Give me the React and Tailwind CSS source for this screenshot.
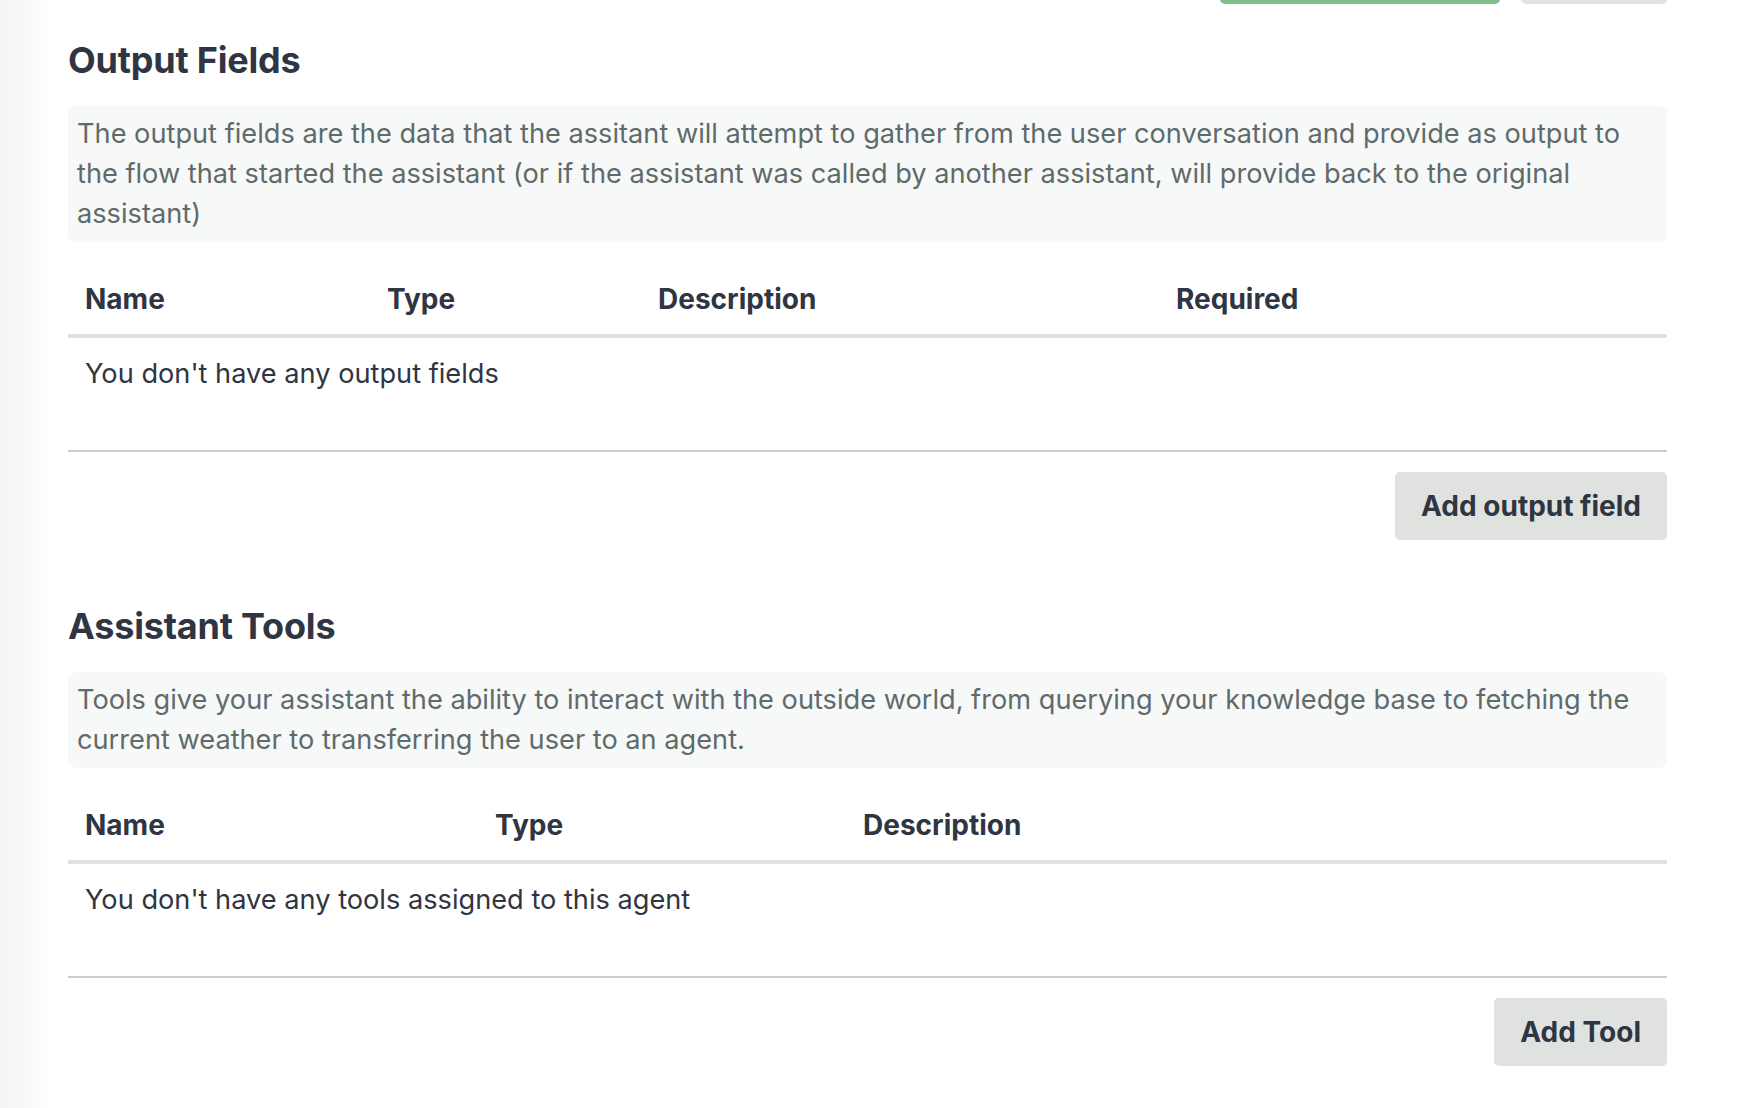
const outputColumns = [
  { label: "Name", width: "w-[302px]" },
  { label: "Type", width: "w-[271px]" },
  { label: "Description", width: "w-[518px]" },
  { label: "Required", width: "" },
];

const toolColumns = [
  { label: "Name", width: "w-[410px]" },
  { label: "Type", width: "w-[368px]" },
  { label: "Description", width: "" },
];

function SectionTable({ columns, emptyText }) {
  return (
    <table className="w-full mt-[21px] table-fixed border-collapse">
      <thead>
        <tr className="border-b-[4px] border-[#e0e2df]">
          {columns.map((col) => (
            <th
              key={col.label}
              className={`${col.width} text-left font-bold text-[28px] leading-[36px] px-[17px] pt-[18px] pb-[17px] text-[#2f3542]`}
            >
              {col.label}
            </th>
          ))}
        </tr>
      </thead>
      <tbody>
        <tr className="border-b-2 border-[#cccccc]">
          <td
            colSpan={columns.length}
            className="text-[27.2px] leading-[36px] px-[17px] pt-[18px] pb-[58px] text-[#2f3542]"
          >
            {emptyText}
          </td>
        </tr>
      </tbody>
    </table>
  );
}

function Section({ title, description, columns, emptyText, buttonLabel, className = "" }) {
  return (
    <section className={className}>
      <h2 className="text-[36px] leading-[40px] font-bold text-[#2f3542] tracking-[-0.2px]">{title}</h2>
      <p className="mt-[26px] bg-[#f7f8f8] rounded-lg px-[9px] py-2 text-[27.2px] leading-[40px] text-[#5f6b6b]">
        {description}
      </p>
      <SectionTable columns={columns} emptyText={emptyText} />
      <div className="flex justify-end mt-[20px]">
        <button className="bg-[#e0e2df] rounded-[5px] px-[26px] py-4 text-[28px] leading-[36px] font-bold text-[#2f3542]">
          {buttonLabel}
        </button>
      </div>
    </section>
  );
}

export default function App() {
  return (
    <div
      className="min-h-[1108px] flex bg-white"
      style={{ fontFamily: "Inter, 'Noto Sans', 'Liberation Sans', sans-serif" }}
    >
      {/* sidebar shadow edge */}
      <div className="w-[50px] shrink-0 bg-gradient-to-r from-[#f3f3f3] to-white" />

      <div className="flex-1 pl-[18px] pr-[79px] overflow-hidden">
        {/* buttons of the section above, scrolled off */}
        <div className="flex justify-end gap-[21px] -mt-[64px]">
          <button className="w-[280px] h-[68px] rounded-[5px] bg-[#80c08f]" />
          <button className="w-[146px] h-[68px] rounded-[5px] bg-[#e0e2df]" />
        </div>

        <Section
          className="mt-[36px]"
          title="Output Fields"
          description="The output fields are the data that the assitant will attempt to gather from the user conversation and provide as output to the flow that started the assistant (or if the assistant was called by another assistant, will provide back to the original assistant)"
          columns={outputColumns}
          emptyText="You don't have any output fields"
          buttonLabel="Add output field"
        />

        <Section
          className="mt-[66px]"
          title="Assistant Tools"
          description="Tools give your assistant the ability to interact with the outside world, from querying your knowledge base to fetching the current weather to transferring the user to an agent."
          columns={toolColumns}
          emptyText="You don't have any tools assigned to this agent"
          buttonLabel="Add Tool"
        />
      </div>
    </div>
  );
}
